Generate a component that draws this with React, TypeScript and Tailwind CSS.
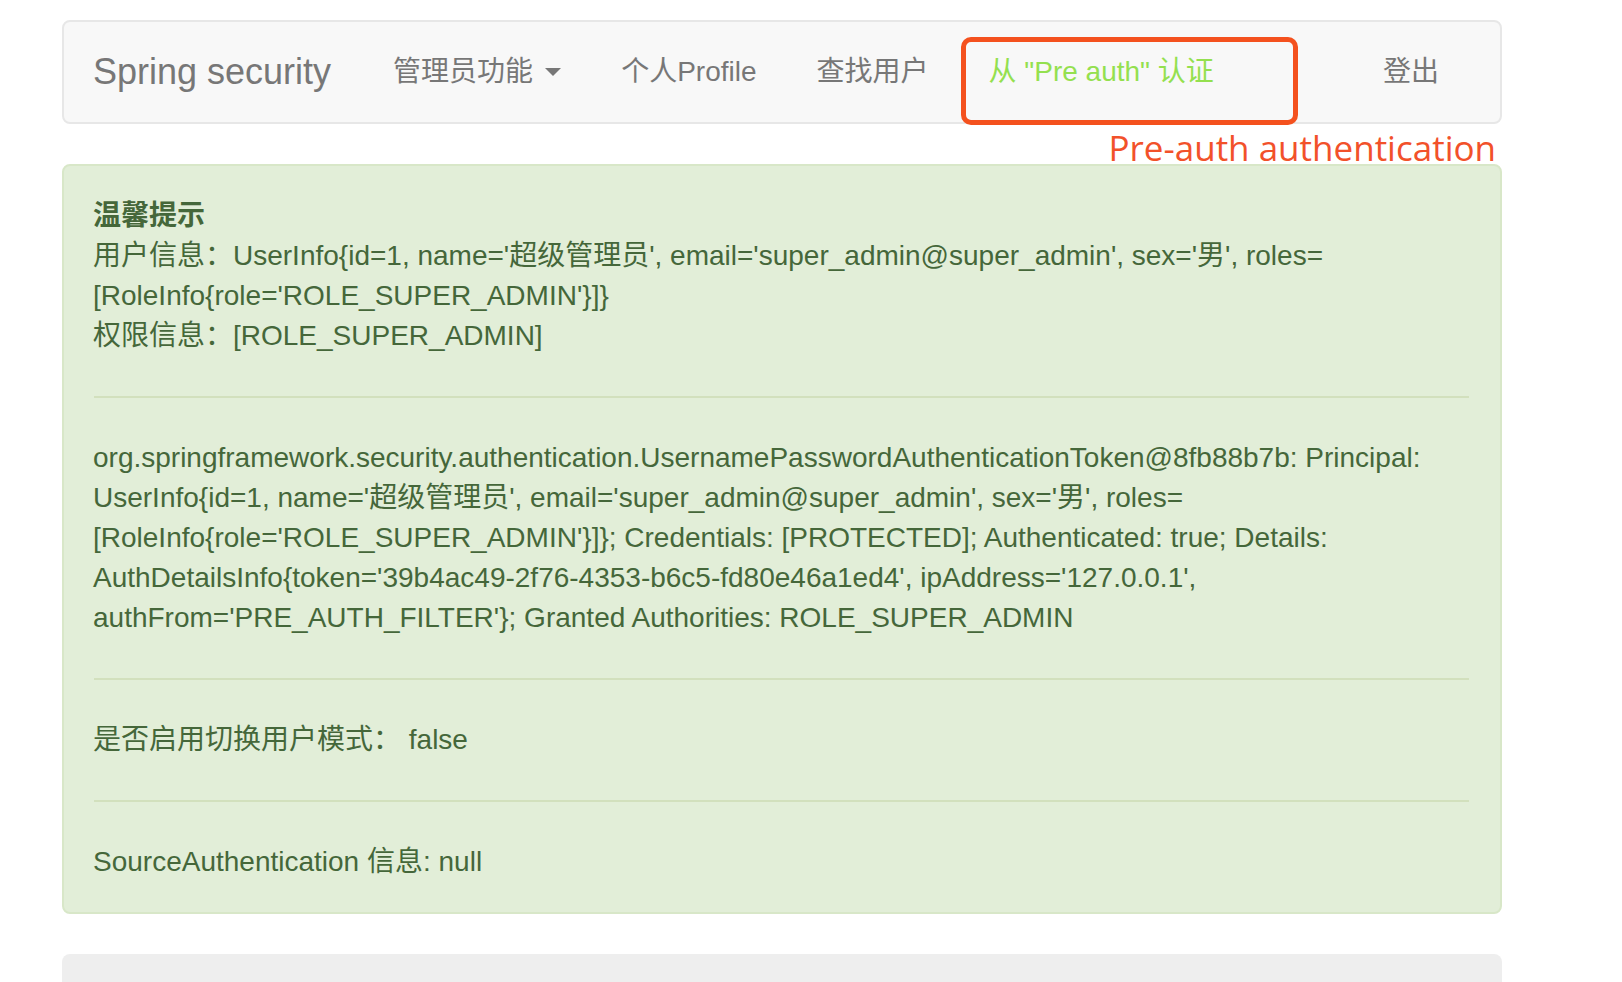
const font = "font-['Liberation_Sans','Noto_Sans_CJK_SC',sans-serif]";

const NavLink = ({ label, active, caret }: { label: string; active?: boolean; caret?: boolean }) => {
  return (
    <a
      className={
        "flex items-center px-[30px] h-full text-[28px] leading-[40px] " +
        (active ? "text-[#94e04f]" : "text-[#777777]")
      }
    >
      <span>{label}</span>
      {caret && (
        <span className="ml-[12px] inline-block w-0 h-0 border-l-[8px] border-r-[8px] border-t-[8px] border-l-transparent border-r-transparent border-t-[#777777]" />
      )}
    </a>
  );
};

const Line = ({ children }: { children: React.ReactNode }) => (
  <div className="whitespace-nowrap">{children}</div>
);

export default function App() {
  return (
    <div className={"min-h-[982px] bg-white pl-[62px] pt-[20px] overflow-hidden " + font}>
      <div className="relative w-[1440px]">
        {/* navbar */}
        <nav className="flex items-center justify-between h-[104px] bg-[#f8f8f8] border-2 border-[#e7e7e7] rounded-[8px] pr-[31px]">
          <div className="flex items-center h-full">
            <span className="pl-[29px] pr-[32px] text-[36px] leading-[40px] text-[#777777]">Spring security</span>
            <NavLink label="管理员功能" caret />
            <NavLink label="个人Profile" />
            <NavLink label="查找用户" />
            <NavLink label={'从 "Pre auth" 认证'} active />
          </div>
          <NavLink label="登出" />
        </nav>

        {/* annotation */}
        <div className="absolute left-[899px] top-[17px] w-[337px] h-[88px] border-[5px] border-[#f4511e] rounded-[10px]" />
        <div className="absolute right-[6px] top-[106px] text-[35px] leading-[44px] text-[#f2512a] font-['Open_Sans',sans-serif]">
          Pre-auth authentication
        </div>

        {/* alert */}
        <div className="mt-[40px] bg-[#e2eed8] border-2 border-[#d8e7c8] rounded-[8px] py-[30px] pl-[29px] pr-[30px] text-[28px] leading-[40px] text-[#45673a]">
          <Line><b>温馨提示</b></Line>
          <Line>用户信息：UserInfo{"{"}id=1, name='超级管理员', email='super_admin@super_admin', sex='男', roles=</Line>
          <Line>[RoleInfo{"{"}role='ROLE_SUPER_ADMIN'{"}"}]{"}"}</Line>
          <Line>权限信息：[ROLE_SUPER_ADMIN]</Line>
          <hr className="my-[40px] mr-[1px] ml-[1px] border-t-2 border-[#d2e0bd]" />
          <Line>org.springframework.security.authentication.UsernamePasswordAuthenticationToken@8fb88b7b: Principal:</Line>
          <Line>UserInfo{"{"}id=1, name='超级管理员', email='super_admin@super_admin', sex='男', roles=</Line>
          <Line>[RoleInfo{"{"}role='ROLE_SUPER_ADMIN'{"}"}]{"}"}; Credentials: [PROTECTED]; Authenticated: true; Details:</Line>
          <Line>AuthDetailsInfo{"{"}token='39b4ac49-2f76-4353-b6c5-fd80e46a1ed4', ipAddress='127.0.0.1',</Line>
          <Line>authFrom='PRE_AUTH_FILTER'{"}"}; Granted Authorities: ROLE_SUPER_ADMIN</Line>
          <hr className="my-[40px] mr-[1px] ml-[1px] border-t-2 border-[#d2e0bd]" />
          <Line>是否启用切换用户模式： false</Line>
          <hr className="my-[40px] mr-[1px] ml-[1px] border-t-2 border-[#d2e0bd]" />
          <Line>SourceAuthentication 信息: null</Line>
        </div>

        {/* next panel, cut off */}
        <div className="mt-[40px] h-[40px] bg-[#eeeeee] rounded-t-[8px]" />
      </div>
    </div>
  );
}
